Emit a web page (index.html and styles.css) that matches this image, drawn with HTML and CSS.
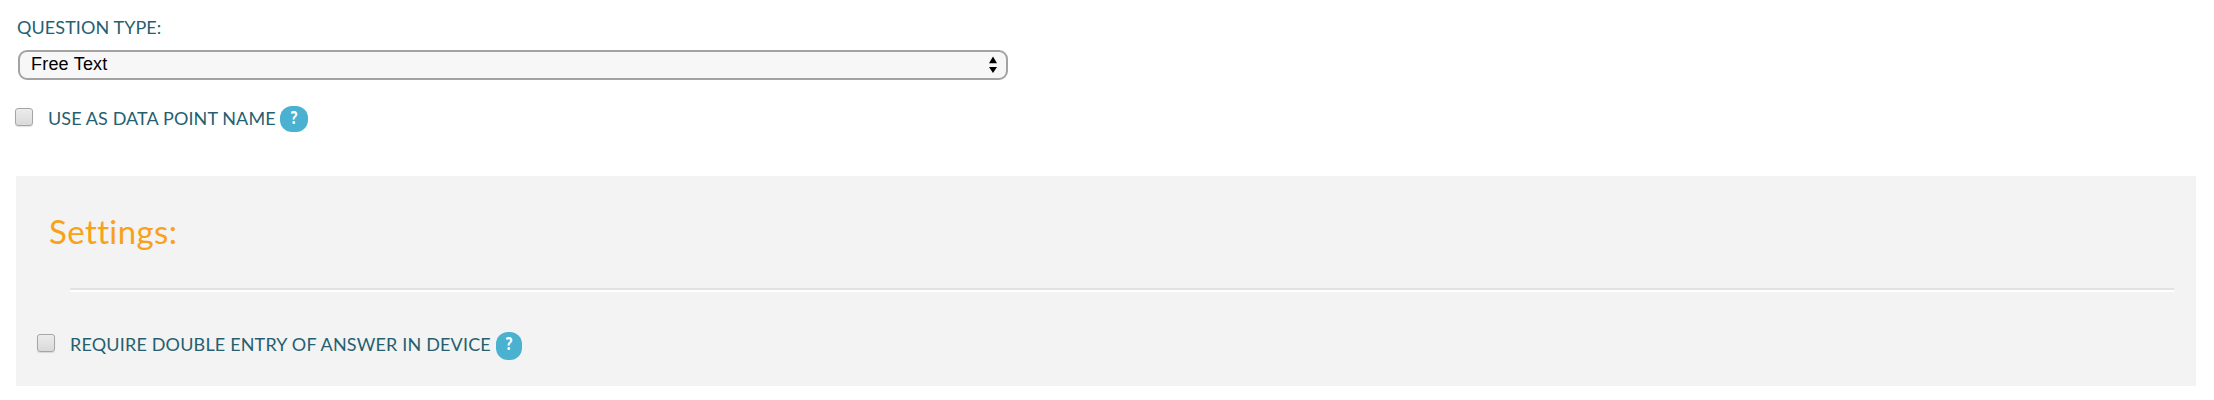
FILE: index.html
```html
<!DOCTYPE html>
<html lang="en">
<head>
<meta charset="utf-8">
<title>Question settings</title>
<link rel="stylesheet" href="styles.css">
</head>
<body>
<form class="question">
  <div class="label type-label">QUESTION TYPE:</div>
  <div class="select">
    <span>Free Text</span>
    <svg class="arrows" width="8" height="18" viewBox="0 0 8 18"><path d="M4 0.5 8 7.3H0ZM4 17 0 11H8Z"/></svg>
  </div>
  <div class="check-row">
    <span class="checkbox"></span>
    <span class="label point-label">USE AS DATA POINT NAME</span>
    <span class="help"><span class="mark">?</span></span>
  </div>
  <section class="panel">
    <h2 class="heading">Settings:</h2>
    <div class="divider"></div>
    <div class="check-row entry-row">
      <span class="checkbox"></span>
      <span class="label entry-label">REQUIRE DOUBLE ENTRY OF ANSWER IN DEVICE</span>
      <span class="help help-tall"><span class="mark">?</span></span>
    </div>
  </section>
</form>
</body>
</html>
```
FILE: styles.css
```css
* { box-sizing: border-box; }
body {
  margin: 0;
  background: #fff;
  font-family: Lato, sans-serif;
}
.question { padding: 15px 18px 0 16px; }
.label {
  color: #265f70;
  font-size: 18px;
  line-height: 24px;
  white-space: nowrap;
}
.type-label { padding-left: 1px; letter-spacing: 0.08px; }
.select {
  display: flex;
  align-items: center;
  justify-content: space-between;
  width: 990px;
  height: 30px;
  margin: 11px 0 0 2px;
  padding: 0 9px 2px 11px;
  border: 2px solid #a3a3a3;
  border-radius: 9px;
  background: #f7f7f7;
  color: #000;
  font: 18px/24px "Liberation Sans", sans-serif;
  letter-spacing: 0.2px;
}
.arrows { position: relative; top: 1px; }
.check-row {
  display: flex;
  align-items: flex-start;
  height: 28px;
  margin: 26px 0 0 -1px;
}
.checkbox {
  width: 18px;
  height: 18px;
  margin: 2px 15px 0 0;
  border: 1.5px solid #a6a6a6;
  border-radius: 3px;
  background: linear-gradient(#ececec, #d9d9d9);
  box-shadow: 0 1px 1px rgba(0, 0, 0, 0.12);
}
.point-label { width: 232px; line-height: 24px; letter-spacing: 0.1px; }
.help {
  width: 28px;
  height: 26px;
  border-radius: 12px;
  background: #4ab1d0;
  color: #fff;
  font: bold 17px/24px "Open Sans", sans-serif;
  text-align: center;
}
.mark { display: inline-block; transform: scaleX(0.82); }
.panel {
  height: 210px;
  margin-top: 42px;
  padding: 34px 22px 0 21px;
  background: #f3f3f3;
}
.heading {
  margin: 0 0 0 12px;
  color: #f8a11b;
  font-size: 33px;
  font-weight: 400;
  line-height: 43px;
  letter-spacing: 0.4px;
}
.divider {
  height: 4px;
  margin: 35px 0 0 33px;
  border-top: 2px solid #e2e2e2;
  border-bottom: 2px solid #fff;
}
.entry-row { margin: 40px 0 0; }
.entry-label { width: 426px; line-height: 25px; letter-spacing: 0.17px; }
.help-tall { width: 26px; height: 28px; }
```
